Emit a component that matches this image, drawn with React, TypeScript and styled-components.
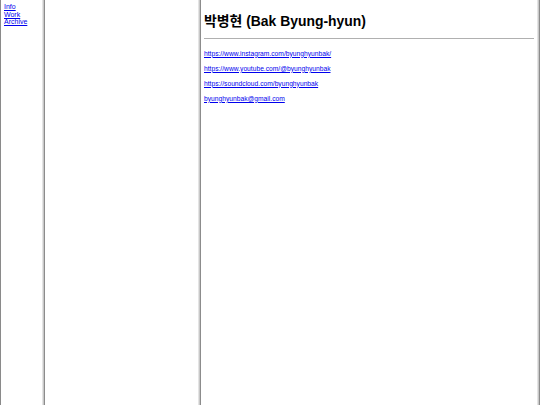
import React from "react";
import styled, { createGlobalStyle } from "styled-components";

const Global = createGlobalStyle`
  html, body { margin: 0; padding: 0; height: 100%; background: #fff; }
  body { font-family: "Liberation Sans", Arial, "Noto Sans CJK KR", sans-serif; }
  #root { height: 100%; }
`;

const Frameset = styled.div`
  display: flex;
  width: 540px;
  height: 405px;
  overflow: hidden;
  border-left: 1px solid #8a8a8a;
  box-sizing: border-box;
`;

const Frame = styled.div<{ $w?: number }>`
  ${(p) => (p.$w ? `width: ${p.$w}px; flex: none;` : "flex: 1;")}
  height: 100%;
  box-sizing: border-box;
  overflow: hidden;
  background: #fff;
`;

const Divider = styled.div`
  flex: none;
  width: 3px;
  height: 100%;
  background: linear-gradient(to right, #e4e4e4 0, #e4e4e4 1px, #c8c8c8 1px, #c8c8c8 2px, #8c8c8c 2px);
`;

const Nav = styled.nav`
  display: flex;
  flex-direction: column;
  padding: 3px 0 0 3px;
  font-size: 7px;
  line-height: 7.7px;
`;

const Link = styled.a`
  color: #0000ee;
  text-decoration: underline;
`;

const Content = styled.div`
  padding: 12px 3px 0 3px;
`;

const Title = styled.h1`
  margin: 0;
  font-size: 13.9px;
  font-weight: bold;
  line-height: 19px;
  color: #000;
`;

const Rule = styled.hr`
  margin: 7px 0 10.5px 0;
  border: none;
  border-top: 1px solid #b0b0b0;
  height: 0;
`;

const LinkList = styled.div`
  display: flex;
  flex-direction: column;
  gap: 7px;
  font-size: 6.7px;
  line-height: 8px;
`;

export default function App() {
  return (
    <>
      <Global />
      <Frameset>
        <Frame $w={41}>
          <Nav>
            <Link href="#">Info</Link>
            <Link href="#">Work</Link>
            <Link href="#">Archive</Link>
          </Nav>
        </Frame>
        <Divider />
        <Frame $w={153} />
        <Divider />
        <Frame>
          <Content>
            <Title>박병현 (Bak Byung-hyun)</Title>
            <Rule />
            <LinkList>
              <Link href="#">https://www.instagram.com/byunghyunbak/</Link>
              <Link href="#">https://www.youtube.com/@byunghyunbak</Link>
              <Link href="#">https://soundcloud.com/byunghyunbak</Link>
              <Link href="#">byunghyunbak@gmail.com</Link>
            </LinkList>
          </Content>
        </Frame>
        <Divider />
      </Frameset>
    </>
  );
}
